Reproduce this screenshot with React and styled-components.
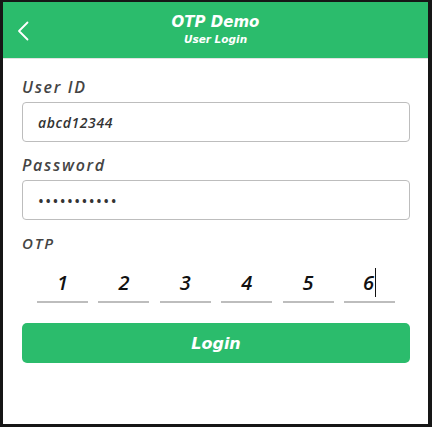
import React from 'react';
import styled, { createGlobalStyle } from 'styled-components';

const GlobalStyle = createGlobalStyle`
  html, body {
    margin: 0;
    padding: 0;
    background: #161616;
  }
  body {
    font-family: 'Open Sans', 'DejaVu Sans', sans-serif;
  }
`;

const otp = ['1', '2', '3', '4', '5', '6'];

export default function App() {
  return (
    <>
      <GlobalStyle />
      <Screen>
        <Header>
          <BackButton aria-label='Back'>
            <svg width='12' height='20' viewBox='0 0 12 20' fill='none'>
              <path d='M10.5 1.5 2 10l8.5 8.5' stroke='white' strokeWidth='1.8' strokeLinecap='round' strokeLinejoin='round' />
            </svg>
          </BackButton>
          <Titles>
            <Title>OTP Demo</Title>
            <Subtitle>User Login</Subtitle>
          </Titles>
        </Header>

        <Form>
          <Label>User ID</Label>
          <Field>abcd12344</Field>

          <Label>Password</Label>
          <Field $secret>•••••••••••</Field>

          <Label $small>OTP</Label>
          <OtpRow>
            {otp.map((digit, i) => (
              <OtpBox key={i}>
                {digit}
                {i === otp.length - 1 && <Caret />}
              </OtpBox>
            ))}
          </OtpRow>

          <LoginButton>Login</LoginButton>
        </Form>
      </Screen>
    </>
  );
}

const Screen = styled.div`
  margin: 2px 4px 3px 3px;
  height: 422px;
  background: white;
  display: flex;
  flex-direction: column;
`;

const Header = styled.header`
  position: relative;
  height: 56px;
  background: #2bbc6c;
  border-bottom: 1px solid #e2e2e2;
  display: flex;
  align-items: center;
  justify-content: center;
`;

const BackButton = styled.button`
  position: absolute;
  left: 14px;
  top: 19px;
  background: none;
  border: none;
  padding: 0;
  cursor: pointer;
`;

const Titles = styled.div`
  display: flex;
  flex-direction: column;
  align-items: center;
  padding-bottom: 2px;
`;

const Title = styled.h1`
  margin: 0;
  color: white;
  font: oblique 700 15px/20px 'DejaVu Sans', sans-serif;
`;

const Subtitle = styled.h2`
  margin: 0;
  color: white;
  font: oblique 700 10.5px/14px 'DejaVu Sans', sans-serif;
`;

const Form = styled.form`
  display: flex;
  flex-direction: column;
  padding: 18px 18px 0 19px;
`;

const Label = styled.label`
  color: #444;
  font: italic 600 ${({ $small }) => ($small ? '15px' : '16px')}/20px 'Open Sans', sans-serif;
  letter-spacing: ${({ $small }) => ($small ? '1.8px' : '1.7px')};
  margin-bottom: 5px;
`;

const Field = styled.div`
  height: 38px;
  border: 1px solid #bdbdbd;
  border-radius: 4px;
  display: flex;
  align-items: center;
  padding-left: 15px;
  color: #333;
  font: italic 600 14px 'Open Sans', sans-serif;
  letter-spacing: ${({ $secret }) => ($secret ? '2px' : '0.6px')};
  margin-bottom: 13px;
`;

const OtpRow = styled.div`
  display: flex;
  justify-content: center;
  gap: 10.4px;
  margin: 5px 0 20px;
`;

const OtpBox = styled.div`
  position: relative;
  width: 51px;
  height: 38px;
  border-bottom: 2px solid #bdbdbd;
  display: flex;
  align-items: center;
  justify-content: center;
  color: #111;
  font: italic 600 20px 'Open Sans', sans-serif;
`;

const Caret = styled.span`
  display: inline-block;
  width: 1px;
  height: 29px;
  background: #111;
  margin-left: 1px;
`;

const LoginButton = styled.button`
  height: 40px;
  border: none;
  border-radius: 5px;
  background: #2bbc6c;
  color: white;
  font: oblique 700 16px 'DejaVu Sans', sans-serif;
  cursor: pointer;
`;
